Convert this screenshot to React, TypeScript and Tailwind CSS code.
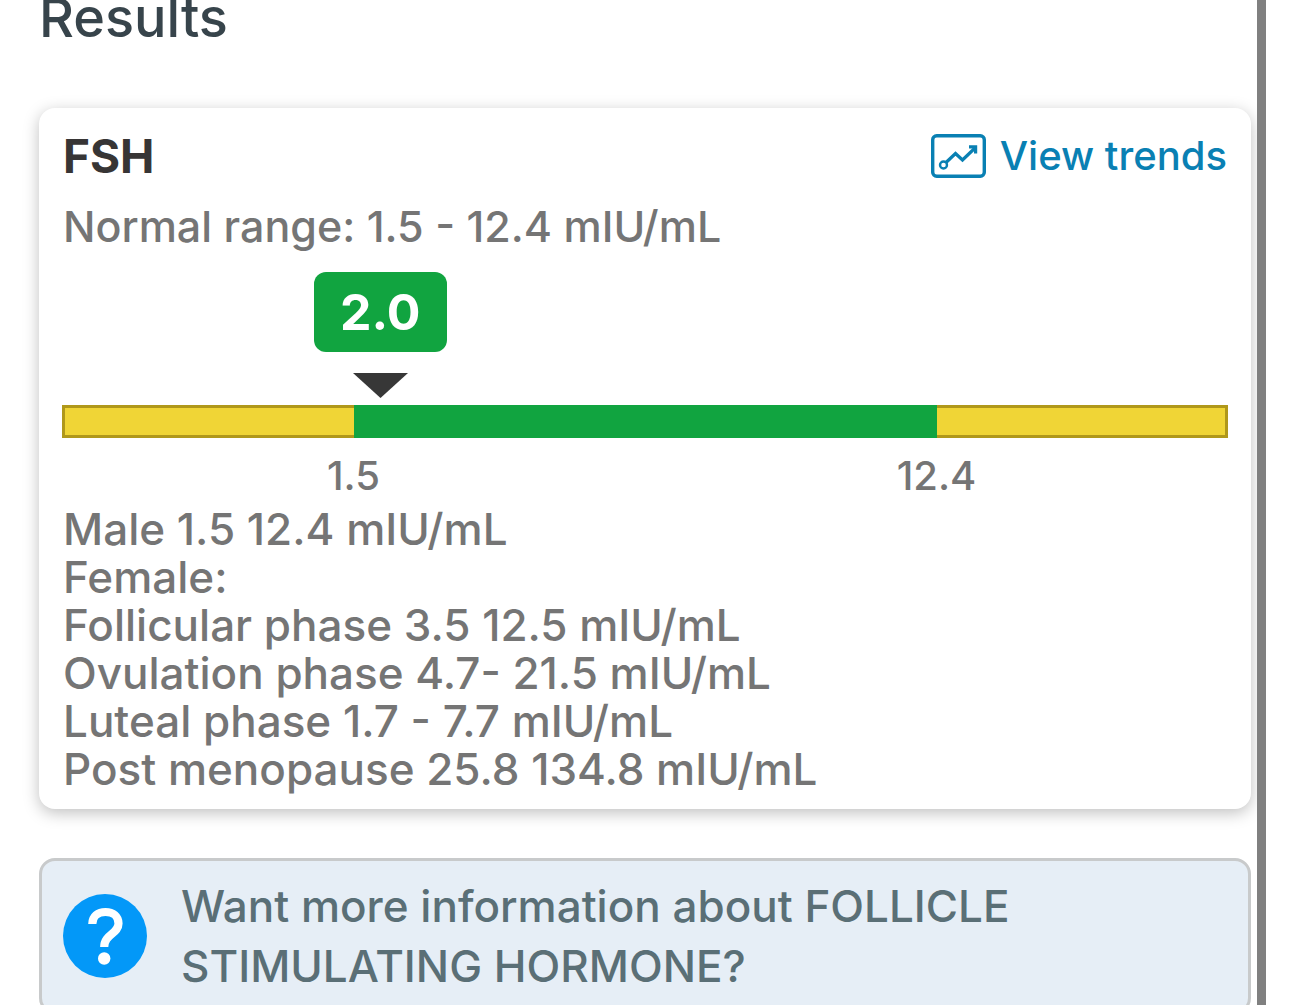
const ranges = [
  'Male 1.5 12.4 mIU/mL',
  'Female:',
  'Follicular phase 3.5 12.5 mIU/mL',
  'Ovulation phase 4.7- 21.5 mIU/mL',
  'Luteal phase 1.7 - 7.7 mIU/mL',
  'Post menopause 25.8 134.8 mIU/mL',
];

const low = 1.5;
const high = 12.4;
const value = 2.0;
// The normal range covers the middle half of the bar.
const markerPercent = 25 + ((value - low) / (high - low)) * 50;

function TrendsIcon() {
  return (
    <svg viewBox="0 0 55 44" className="h-11 w-[55px] shrink-0" fill="none" stroke="currentColor" aria-hidden="true">
      <rect x="1.7" y="1.7" width="51.6" height="40.6" rx="4" strokeWidth="3.4" />
      <circle cx="12.5" cy="31" r="3.5" strokeWidth="2.4" />
      <path d="M15 28.5 L24.5 19.5 L31.5 26 L44 14" strokeWidth="3.2" />
      <path d="M38 12.9 H44.6 V19.5" strokeWidth="3.2" />
    </svg>
  );
}

function QuestionIcon() {
  return (
    <svg viewBox="0 0 84 84" className="size-[84px] shrink-0" aria-hidden="true">
      <circle cx="42" cy="42" r="42" fill="#0398f8" />
      <path
        d="M29.3 30 C29.3 22.5 35 18 42.5 18 C50 18 55.5 22.5 55.5 29.5 C55.5 40 41.2 40 41.2 53"
        fill="none"
        stroke="#fff"
        strokeWidth="8.2"
      />
      <circle cx="41.2" cy="64.5" r="6.2" fill="#fff" />
    </svg>
  );
}

function RangeGauge() {
  return (
    <div className="-mx-px mt-[22px]">
      <div className="flex w-0 flex-col items-center" style={{ marginLeft: `${markerPercent}%` }}>
        <output className="flex h-20 w-[133px] shrink-0 items-center justify-center rounded-xl bg-[#11a440] text-[50px] font-bold text-white">
          {value.toFixed(1)}
        </output>
        <svg viewBox="0 0 55 25" className="mt-[21px] h-[25px] w-[55px] shrink-0" aria-hidden="true">
          <path d="M0 0 H55 L27.5 25 Z" fill="#373737" />
        </svg>
      </div>
      <div className="mt-[7px] flex h-[33px]">
        <div className="w-1/4 border-y-3 border-l-3 border-[#b0981a] bg-[#f0d536]" />
        <div className="w-1/2 bg-[#11a440]" />
        <div className="w-1/4 border-y-3 border-r-3 border-[#b0981a] bg-[#f0d536]" />
      </div>
      <div className="mt-3.5 flex text-center text-[40px]">
        <span className="w-1/2">{low}</span>
        <span className="w-1/2">{high}</span>
      </div>
    </div>
  );
}

export default function App() {
  return (
    <div className="flex h-screen overflow-hidden bg-white font-['Inter',sans-serif] text-[43px] font-medium">
      <main className="min-w-0 flex-1 pr-1.5 pl-[39px]">
        <h1 className="-mt-3 text-[54px] leading-[60px] text-[#37444b]">Results</h1>
        <section className="mt-[60px] rounded-2xl bg-white px-6 pt-5 pb-4 leading-[48px] text-[#757575] shadow-[0_4px_16px_rgba(0,0,0,0.25)]">
          <div className="flex items-center justify-between">
            <h2 className="text-[46px] leading-[56px] font-bold text-[#373535]">FSH</h2>
            <a href="#trends" className="flex items-center gap-3.5 text-[40px] text-[#0980b3]">
              <TrendsIcon />
              View trends
            </a>
          </div>
          <p className="mt-[18px]">Normal range: 1.5 - 12.4 mIU/mL</p>
          <RangeGauge />
          <ul className="mt-[5px] text-[44px]">
            {ranges.map((range) => (
              <li key={range}>{range}</li>
            ))}
          </ul>
        </section>
        <a
          href="#information"
          className="mt-[49px] flex items-center gap-[34px] rounded-2xl border-3 border-[#c8cacb] bg-[#e6eef6] px-[21px] py-[15px] text-[44px] leading-[60px] text-[#5a6f76]"
        >
          <QuestionIcon />
          <span>
            Want more information about FOLLICLE <br />
            STIMULATING HORMONE?
          </span>
        </a>
      </main>
      <div className="mr-6 w-[9px] bg-[#808080]" />
    </div>
  );
}
